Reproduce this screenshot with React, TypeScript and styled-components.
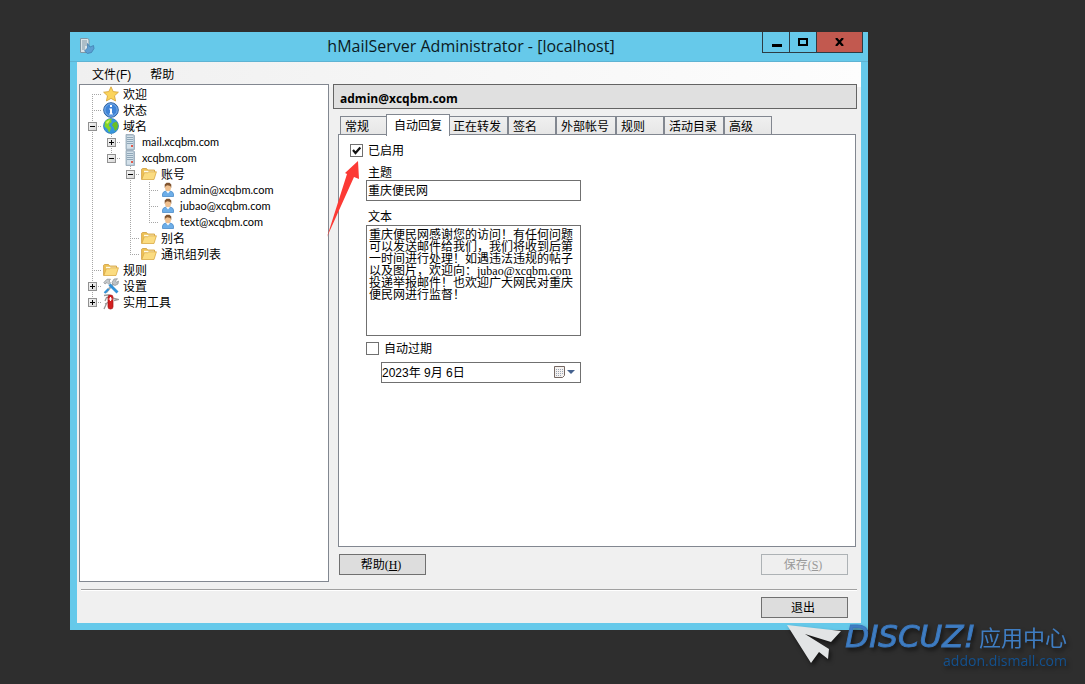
import React, { useState } from "react";
import styled, { createGlobalStyle, css } from "styled-components";

const sans = `"Liberation Sans", "Noto Sans CJK SC", sans-serif`;
const serif = `"Liberation Serif", "Noto Sans CJK SC", serif`;
const ui = `"Open Sans", "Noto Sans CJK SC", sans-serif`;
const edge = "#828790";
const dark = "#707070";

const GlobalStyle = createGlobalStyle`
  * { box-sizing: border-box; }
  body { margin: 0; background: #2e2e2e; color: #000; font: 12px/16px ${sans}; }
  button, input, textarea { font: inherit; color: inherit; margin: 0; border-radius: 0; }
`;

const Desktop = styled.div`
  position: relative;
  display: flex;
  min-height: 100vh;
  padding: 32px 217px 54px 70px;
  overflow: hidden;
`;

const Window = styled.main`
  position: relative;
  display: flex;
  flex-direction: column;
  flex: 1;
  min-width: 0;
  background: #66c9ea;
  padding-bottom: 7px;
`;

const TitleBar = styled.header`
  display: grid;
  grid-template-columns: 1fr auto 1fr;
  height: 30px;
  padding: 0 5px 0 9px;
  border-bottom: 1px solid #5eb3d3;
`;

const AppIcon = styled.svg`
  margin-top: 6px;
`;

const Title = styled.h1`
  margin: 0;
  font: 16px/28px ${ui};
  color: #0b1a22;
  white-space: nowrap;
`;

const Controls = styled.div`
  display: flex;
  justify-self: end;
  height: 21px;
`;

const ControlButton = styled.button<{ $close?: boolean }>`
  display: grid;
  place-items: center;
  width: ${(p) => (p.$close ? 47 : 28)}px;
  padding: 0;
  border: 1px solid #2d3c44;
  border-top: 0;
  background: ${(p) => (p.$close ? "#c2594f" : "#66c9ea")};
  & + & { margin-left: -1px; }
`;

const Client = styled.div`
  display: flex;
  flex-direction: column;
  flex: 1;
  margin: 0 7px;
  background: #f0f0f0 linear-gradient(90deg, #f0f0f0, #fdfdfd) 0 0 / 100% 25px no-repeat;
`;

const MenuBar = styled.nav`
  display: flex;
  gap: 19px;
  height: 22px;
  padding-left: 15px;
`;

const MenuItem = styled.button`
  padding: 0;
  border: 0;
  background: none;
  line-height: 26px;
`;

const Body = styled.div`
  display: flex;
  flex: 1;
  gap: 4px;
  padding: 0 4px 0 2px;
`;

const Tree = styled.ul`
  flex: 0 0 250px;
  margin: 0;
  padding: 1px 0 0 3px;
  list-style: none;
  background: #fff;
  border: 1px solid ${edge};
`;

const TreeRow = styled.li`
  display: flex;
  align-items: center;
  height: 16px;
`;

type Guide = "none" | "line" | "first" | "tee" | "end";

const dotsV = "repeating-linear-gradient(180deg, #a6a6a6 0 1px, transparent 1px 2px)";
const dotsH = "repeating-linear-gradient(90deg, #a6a6a6 0 1px, transparent 1px 2px)";

const GuideCell = styled.span<{ $kind: Guide }>`
  flex: none;
  display: grid;
  place-items: center;
  width: 19px;
  height: 16px;
  background-repeat: no-repeat;
  ${({ $kind: k }) =>
    k === "line" && css`background-image: ${dotsV}; background-size: 1px 16px; background-position: 9px 0;`}
  ${({ $kind: k }) =>
    (k === "tee" || k === "end" || k === "first") &&
    css`
      background-image: ${dotsV}, ${dotsH};
      background-size: 1px ${k === "tee" ? 16 : 8}px, 10px 1px;
      background-position: 9px ${k === "first" ? 8 : 0}px, 9px 8px;
    `}
`;

const Toggle = styled.button`
  display: block;
  width: 9px;
  height: 9px;
  padding: 0;
  border: 1px solid #919191;
  background: linear-gradient(135deg, #f4f4f4, #d8d8d8);
  svg { display: block; }
`;

const TreeIcon = styled.svg`
  flex: none;
  margin: 0 4px 0 1px;
`;

const TreeLabel = styled.span<{ $latin?: boolean }>`
  padding-top: ${(p) => (p.$latin ? 0 : 2)}px;
  font-family: ${(p) => (p.$latin ? `Lato, ${sans}` : sans)};
  font-size: ${(p) => (p.$latin ? 11 : 12)}px;
  white-space: nowrap;
`;

const Content = styled.section`
  display: flex;
  flex-direction: column;
  flex: 1;
  min-width: 0;
`;

const Heading = styled.h2`
  margin: 0 0 5px;
  height: 25px;
  padding: 0 6px;
  border: 1px solid #646464;
  background: #e0e0e0;
  font: bold 12px/27px ${ui};
`;

const Tabs = styled.div`
  display: flex;
  align-items: flex-end;
  height: 20px;
  padding-left: 7px;
`;

const Tab = styled.button<{ $active?: boolean }>`
  flex: none;
  height: 18px;
  min-width: 48px;
  padding: 0 6px 0 4px;
  border: 1px solid ${edge};
  border-bottom: 0;
  background: linear-gradient(#f0f0f0, #e6e6e6);
  line-height: 20px;
  text-align: left;
  ${(p) =>
    p.$active &&
    css`
      position: relative;
      height: 22px;
      margin: 0 -2px -2px;
      padding: 0 7px;
      background: #fff;
    `}
`;

const Panel = styled.div`
  flex: 1;
  margin: 0 1px 0 5px;
  padding: 7px 11px;
  border: 1px solid ${edge};
  background: #fff;
`;

const CheckRow = styled.label<{ $inset?: boolean }>`
  display: flex;
  align-items: center;
  gap: 5px;
  height: 17px;
  margin-left: ${(p) => (p.$inset ? 16 : 0)}px;
`;

const CheckBox = styled.span`
  display: grid;
  width: 13px;
  height: 13px;
  > * { grid-area: 1 / 1; }
  svg { pointer-events: none; }
`;

const CheckInput = styled.input`
  appearance: none;
  width: 13px;
  height: 13px;
  border: 1px solid ${dark};
  background: #fff;
`;

const Fields = styled.div`
  width: 215px;
  margin: 5px 0 4px 16px;
`;

const FieldLabel = styled.label`
  display: block;
  height: 16px;
  padding-left: 2px;
  line-height: 18px;
`;

const TextInput = styled.input`
  display: block;
  width: 100%;
  height: 21px;
  margin-bottom: 7px;
  padding: 0 1px 2px;
  border: 1px solid ${dark};
`;

const TextArea = styled.textarea`
  display: block;
  width: 100%;
  height: 111px;
  margin-top: 1px;
  padding: 3px 2px;
  border: 1px solid ${dark};
  font: 12px/12px ${serif};
  resize: none;
  overflow: hidden;
  white-space: pre;
`;

const DateField = styled.div`
  display: flex;
  width: 200px;
  height: 21px;
  margin: 5px 0 0 31px;
  border: 1px solid ${dark};
`;

const DateInput = styled.input`
  flex: 1;
  min-width: 0;
  padding: 0;
  border: 0;
`;

const DateButton = styled.button`
  padding: 0 5px 2px;
  border: 0;
  background: none;
  svg { display: block; }
`;

const Actions = styled.div`
  display: flex;
  justify-content: space-between;
  margin: 7px 9px 7px 6px;
`;

const PushButton = styled.button`
  width: 87px;
  height: 21px;
  padding: 0 3px 0 0;
  border: 1px solid ${dark};
  background: #ddd;
  font-family: ${serif};
  line-height: 18px;
  &:disabled { border-color: #adb2b5; background: #efefef; color: #9a9a9a; }
`;

const Footer = styled.footer`
  display: flex;
  justify-content: flex-end;
  margin: 7px 4px 0;
  padding: 6px 9px 5px 0;
  border-top: 1px solid #a0a0a0;
  box-shadow: inset 0 1px #fff;
  height: 34px;
  align-items: flex-end;
`;

const Pointer = styled.svg`
  position: absolute;
  left: 257px;
  top: 128px;
  pointer-events: none;
`;

const Watermark = styled.aside`
  position: absolute;
  right: 18px;
  bottom: 15px;
  display: flex;
  align-items: flex-start;
  filter: drop-shadow(2px 3px 2px rgba(0, 0, 0, 0.55));
`;

const Brand = styled.div`
  display: flex;
  flex-direction: column;
  align-items: flex-end;
  gap: 5px;
  margin-left: 4px;
`;

const BrandName = styled.div`
  display: flex;
  align-items: center;
  gap: 3px;
  height: 24px;
  color: #3f7dc2;
  font: 22px/22px "Noto Sans CJK SC", sans-serif;
  white-space: nowrap;
  em {
    font: italic 31px/24px "DejaVu Sans", sans-serif;
    -webkit-text-stroke: 1px #3a76bb;
  }
`;

const BrandLink = styled.a`
  color: #13518f;
  font: 14px/16px ${ui};
  text-decoration: none;
`;

type IconName = "star" | "info" | "globe" | "server" | "folder" | "user" | "tools" | "knife";

const drawings: Record<IconName, React.ReactNode> = {
  star: (
    <path d="M8 .8 10.2 5.6 15.4 6.2 11.5 9.8 12.6 15 8 12.4 3.4 15 4.5 9.8.6 6.2 5.8 5.6Z" fill="#fbd45c" stroke="#d3a035" strokeWidth=".8" />
  ),
  info: (
    <>
      <circle cx="8" cy="8" r="7.3" fill="#3f83d6" stroke="#2c5f9f" />
      <circle cx="8" cy="8" r="6.2" fill="none" stroke="#8dbcf0" strokeWidth=".8" />
      <path d="M7 3h2v2H7zM6.3 6.5H9v5h1v1H6.2v-1H7v-4h-.7z" fill="#fff" />
    </>
  ),
  globe: (
    <>
      <circle cx="8" cy="8" r="7.5" fill="#3896dd" stroke="#2376b8" strokeWidth=".7" />
      <path d="M2 3.5C4 1 7 .4 9 1L8 3 9 4 6.500 5.500 6 8 8 9.500 7 13 6 14.500 4.500 11 1.500 8.500Z" fill="#83d528" />
      <path d="M10 5 13.500 3.500 15 7 14.500 10.500 12 13 10.500 9 9 7.500Z" fill="#6abf23" />
      <path d="M3 4 7 1.500 6 4 4 6Z" fill="#d5f266" />
    </>
  ),
  server: (
    <>
      <path d="M4 .5h7l1.500 1v14H4z" fill="#b5c6d3" stroke="#93a6b5" strokeWidth=".8" />
      <path d="M5 2h6v12.500H5z" fill="#d3e0e9" />
      <path d="M5 3.500h6M5 5.500h6M5 7.500h6M5 9.500h6" stroke="#8fa7b8" />
      <path d="M9 11h2v2H9z" fill="#e1594a" />
    </>
  ),
  folder: (
    <>
      <path d="M.6 13.500V3.200L1.500 2.500h4l1.200 1.500h6.800v3" fill="#eec257" stroke="#cf9c3a" strokeWidth=".8" />
      <path d="M3 4.800h10v3H3z" fill="#fffbe8" />
      <path d="M.8 13.500 3.300 6.700h3.500l1-.9h7.600L13 13.500Z" fill="#fbdc81" stroke="#d9a945" strokeWidth=".8" />
    </>
  ),
  user: (
    <>
      <path d="M2.500 14.500V12l1-2 3-1.200h3l3 1.200 1 2v2.500z" fill="#6daee8" stroke="#4b8bc9" strokeWidth=".8" />
      <path d="m6 9 2 2.500L10 9z" fill="#fff" />
      <ellipse cx="8" cy="5.500" rx="3" ry="3.800" fill="#efc08f" />
      <path d="M4.700 6V2.500L6.500.8h3l1.800 1.700V6l-1-2L7.500 3.200 5.700 4z" fill="#80542f" />
    </>
  ),
  tools: (
    <>
      <path d="m3 14.500 7.500-9" stroke="#a5a9ac" strokeWidth="2" />
      <path d="M9 4.500 11 1l3.500-.3L12.500 3l1 1.300L15.500 3 15 6l-3 1.500-2-1Z" fill="#bfc3c6" stroke="#8b9093" strokeWidth=".7" />
      <path d="M.8 4.500 4 1.200h3.500L6 3l1.500 2L6 6.500 4 4.500 2 6Z" fill="#c6cacd" stroke="#878c8f" strokeWidth=".7" />
      <path d="m6.500 6.500 8 8" stroke="#3292d8" strokeWidth="2.800" />
      <path d="m1.500 15 4-4" stroke="#3292d8" strokeWidth="2.200" />
    </>
  ),
  knife: (
    <>
      <path d="M1 1.500 6 .8 7 3 3.500 3.500 2 7M10 4l5 1.500-4 1M3.500 9.500 1 15M6 8l-4 2" fill="none" stroke="#999" strokeWidth="1.300" />
      <rect x="5" y="1" width="5" height="14" rx="2.300" fill="#d32020" stroke="#a01515" strokeWidth=".7" />
      <path d="M7.500 3v4M5.700 5h3.600" stroke="#fff" strokeWidth="1.200" />
    </>
  ),
};

interface Node {
  label: string;
  icon: IconName;
  guides: Guide[];
  toggle?: "+" | "-";
}

const nodes: Node[] = [
  { label: "欢迎", icon: "star", guides: ["first"] },
  { label: "状态", icon: "info", guides: ["tee"] },
  { label: "域名", icon: "globe", guides: ["tee"], toggle: "-" },
  { label: "mail.xcqbm.com", icon: "server", guides: ["line", "tee"], toggle: "+" },
  { label: "xcqbm.com", icon: "server", guides: ["line", "end"], toggle: "-" },
  { label: "账号", icon: "folder", guides: ["line", "none", "tee"], toggle: "-" },
  { label: "admin@xcqbm.com", icon: "user", guides: ["line", "none", "line", "tee"] },
  { label: "jubao@xcqbm.com", icon: "user", guides: ["line", "none", "line", "tee"] },
  { label: "text@xcqbm.com", icon: "user", guides: ["line", "none", "line", "end"] },
  { label: "别名", icon: "folder", guides: ["line", "none", "tee"] },
  { label: "通讯组列表", icon: "folder", guides: ["line", "none", "end"] },
  { label: "规则", icon: "folder", guides: ["tee"] },
  { label: "设置", icon: "tools", guides: ["tee"], toggle: "+" },
  { label: "实用工具", icon: "knife", guides: ["end"], toggle: "+" },
];

const tabs = ["常规", "自动回复", "正在转发", "签名", "外部帐号", "规则", "活动目录", "高级"];

const message = [
  "重庆便民网感谢您的访问！有任何问题",
  "可以发送邮件给我们，我们将收到后第",
  "一时间进行处理！如遇违法违规的帖子",
  "以及图片，欢迎向：jubao@xcqbm.com",
  "投递举报邮件！也欢迎广大网民对重庆",
  "便民网进行监督！",
].join("\n");

function Check({ label, initial, inset }: { label: string; initial: boolean; inset?: boolean }) {
  const [on, setOn] = useState(initial);
  return (
    <CheckRow $inset={inset}>
      <CheckBox>
        <CheckInput type="checkbox" checked={on} onChange={() => setOn(!on)} />
        {on && (
          <svg width="13" height="13" viewBox="0 0 13 13" aria-hidden="true">
            <path d="m3 6 2.500 3L10.300 3.500" fill="none" stroke="#111" strokeWidth="2.200" />
          </svg>
        )}
      </CheckBox>
      {label}
    </CheckRow>
  );
}

export default function App() {
  const [active, setActive] = useState(1);
  return (
    <Desktop>
      <GlobalStyle />
      <Window>
        <TitleBar>
          <AppIcon width="16" height="16" viewBox="0 0 16 16" aria-hidden="true">
            <path d="M1.500.500h7l1.500 1v13H1.500z" fill="#d9e3e8" stroke="#7f97a5" />
            <path d="M3 3h5M3 5h5M3 7h5M3 9h3M3 11h3" stroke="#8198a7" />
            <path d="M8.500 5.500 11 9l3.500-1.500.5 3-2.500 4-4 1-3-2.500 3-3Z" fill="#5c9fd3" stroke="#3c78ab" strokeWidth=".7" />
          </AppIcon>
          <Title>hMailServer Administrator - [localhost]</Title>
          <Controls>
            <ControlButton aria-label="Minimize">
              <svg width="11" height="11" aria-hidden="true"><path d="M1 7h10v3H1z" /></svg>
            </ControlButton>
            <ControlButton aria-label="Maximize">
              <svg width="10" height="8" aria-hidden="true"><path d="M1 1h8v6H1z" fill="none" stroke="#000" strokeWidth="2" /></svg>
            </ControlButton>
            <ControlButton $close aria-label="Close">
              <svg width="9" height="8" aria-hidden="true"><path d="m1 0 7 8M8 0 1 8" stroke="#000" strokeWidth="2.200" /></svg>
            </ControlButton>
          </Controls>
        </TitleBar>
        <Client>
          <MenuBar>
            <MenuItem>文件(F)</MenuItem>
            <MenuItem>帮助</MenuItem>
          </MenuBar>
          <Body>
            <Tree>
              {nodes.map((n, i) => (
                <TreeRow key={i}>
                  {n.guides.map((g, j) => (
                    <GuideCell key={j} $kind={g}>
                      {n.toggle && j === n.guides.length - 1 && (
                        <Toggle aria-label={n.toggle === "+" ? "Expand" : "Collapse"}>
                          <svg width="7" height="7" aria-hidden="true">
                            <path d={n.toggle === "+" ? "M1 3h5v1H1zM3 1h1v5H3z" : "M1 3h5v1H1z"} />
                          </svg>
                        </Toggle>
                      )}
                    </GuideCell>
                  ))}
                  <TreeIcon width="16" height="16" viewBox="0 0 16 16" aria-hidden="true">
                    {drawings[n.icon]}
                  </TreeIcon>
                  <TreeLabel $latin={n.label.includes(".")}>{n.label}</TreeLabel>
                </TreeRow>
              ))}
            </Tree>
            <Content>
              <Heading>admin@xcqbm.com</Heading>
              <Tabs role="tablist">
                {tabs.map((t, i) => (
                  <Tab key={t} role="tab" aria-selected={i === active} $active={i === active} onClick={() => setActive(i)}>
                    {t}
                  </Tab>
                ))}
              </Tabs>
              <Panel role="tabpanel">
                <Check label="已启用" initial />
                <Fields>
                  <FieldLabel htmlFor="subject">主题</FieldLabel>
                  <TextInput id="subject" defaultValue="重庆便民网" />
                  <FieldLabel htmlFor="body">文本</FieldLabel>
                  <TextArea id="body" defaultValue={message} spellCheck={false} />
                </Fields>
                <Check label="自动过期" initial={false} inset />
                <DateField>
                  <DateInput aria-label="过期日期" defaultValue="2023年 9月 6日" />
                  <DateButton aria-label="选择日期">
                    <svg width="21" height="12" aria-hidden="true">
                      <path d="M.5.500h10v9l-2 2h-8z" fill="#f4f1ef" stroke="#746762" />
                      <path d="M2 3.500h7M2 5.500h7M2 7.500h7M2 9.500h6" stroke="#9aa5b5" strokeDasharray="1 1" />
                      <path d="M13 4h8l-4 4z" fill="#45628f" />
                    </svg>
                  </DateButton>
                </DateField>
              </Panel>
              <Actions>
                <PushButton>帮助(<u>H</u>)</PushButton>
                <PushButton disabled>保存(<u>S</u>)</PushButton>
              </Actions>
            </Content>
          </Body>
          <Footer>
            <PushButton>退出</PushButton>
          </Footer>
        </Client>
        <Pointer width="34" height="78" viewBox="0 0 34 78" aria-hidden="true">
          <path d="M31 1 32 19 27 17 0 77 20 14 18 13Z" fill="#fc3a35" />
        </Pointer>
      </Window>
      <Watermark>
        <svg width="54" height="42" viewBox="0 0 54 42" aria-hidden="true">
          <path d="M0 1 54 7 44 18 18 10 42 25 41 35 32 28 24 39Z" fill="#e2e4e5" />
        </svg>
        <Brand>
          <BrandName><em>DISCUZ!</em>应用中心</BrandName>
          <BrandLink href="#addon">addon.dismall.com</BrandLink>
        </Brand>
      </Watermark>
    </Desktop>
  );
}
